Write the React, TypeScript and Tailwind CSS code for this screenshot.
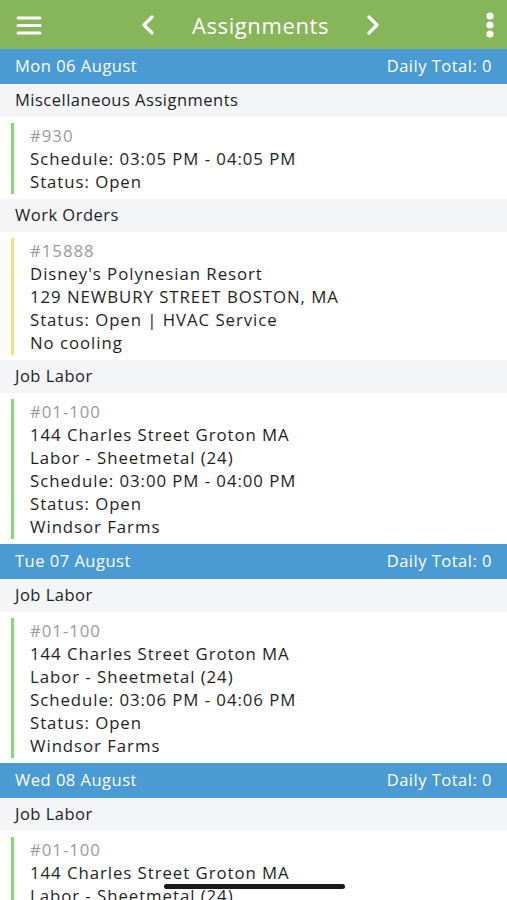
import { Fragment } from "react";

type Card = { id: string; lines: string[]; color: string };
type Group = { title: string; cards: Card[] };
type Day = { date: string; groups: Group[] };

const GREEN = "bg-[#7ee06a]";
const YELLOW = "bg-[#f2e27a]";

const jobLabor = (schedule: string): Card => ({
  id: "#01-100",
  color: GREEN,
  lines: [
    "144 Charles Street Groton MA",
    "Labor - Sheetmetal (24)",
    `Schedule: ${schedule}`,
    "Status: Open",
    "Windsor Farms",
  ],
});

const days: Day[] = [
  {
    date: "Mon 06 August",
    groups: [
      {
        title: "Miscellaneous Assignments",
        cards: [
          {
            id: "#930",
            color: GREEN,
            lines: ["Schedule: 03:05 PM - 04:05 PM", "Status: Open"],
          },
        ],
      },
      {
        title: "Work Orders",
        cards: [
          {
            id: "#15888",
            color: YELLOW,
            lines: [
              "Disney's Polynesian Resort",
              "129 NEWBURY STREET BOSTON, MA",
              "Status: Open | HVAC Service",
              "No cooling",
            ],
          },
        ],
      },
      { title: "Job Labor", cards: [jobLabor("03:00 PM - 04:00 PM")] },
    ],
  },
  {
    date: "Tue 07 August",
    groups: [{ title: "Job Labor", cards: [jobLabor("03:06 PM - 04:06 PM")] }],
  },
  {
    date: "Wed 08 August",
    groups: [{ title: "Job Labor", cards: [jobLabor("03:06 PM - 04:06 PM")] }],
  },
];

function Header() {
  return (
    <div className="h-[49px] bg-[#87b55a] flex items-center px-[16px] text-white shrink-0">
      <svg width="26" height="20" viewBox="0 0 26 20">
        <g stroke="white" strokeWidth="3" strokeLinecap="round">
          <line x1="2" y1="3" x2="24" y2="3" />
          <line x1="2" y1="10.5" x2="24" y2="10.5" />
          <line x1="2" y1="18" x2="24" y2="18" />
        </g>
      </svg>
      <div className="flex-1 flex items-center justify-center gap-[36px] pr-[6px]">
        <svg width="16" height="20" viewBox="0 0 16 20">
          <polyline points="12,2 4,10 12,18" fill="none" stroke="white" strokeWidth="3.2" strokeLinecap="round" strokeLinejoin="round" />
        </svg>
        <span className="text-[22px] leading-none tracking-[0.6px]">Assignments</span>
        <svg width="16" height="20" viewBox="0 0 16 20">
          <polyline points="4,2 12,10 4,18" fill="none" stroke="white" strokeWidth="3.2" strokeLinecap="round" strokeLinejoin="round" />
        </svg>
      </div>
      <svg width="10" height="26" viewBox="0 0 10 26" className="mr-[-4px]">
        <circle cx="5" cy="4" r="3.6" fill="white" />
        <circle cx="5" cy="13" r="3.6" fill="white" />
        <circle cx="5" cy="22" r="3.6" fill="white" />
      </svg>
    </div>
  );
}

function CardView({ card }: { card: Card }) {
  return (
    <div className="bg-white pl-[11px] pt-[7px] pb-[6px]">
      <div className="flex">
        <div className={`w-[3px] ${card.color} my-[-1px]`} />
        <div className="pl-[16px] text-[16.8px] leading-[23px] tracking-[0.95px] text-[#1e1e1e] whitespace-nowrap">
          <div className="text-[#9a9a9a]">{card.id}</div>
          {card.lines.map((l, i) => (
            <div key={i}>{l}</div>
          ))}
        </div>
      </div>
    </div>
  );
}

export default function App() {
  return (
    <div
      className="relative w-[507px] h-[900px] overflow-hidden bg-white flex flex-col"
      style={{ fontFamily: '"Open Sans", "Noto Sans", sans-serif' }}
    >
      <Header />
      {days.map((day) => (
        <Fragment key={day.date}>
          <div className="h-[35px] bg-[#4a9bd4] flex items-center justify-between px-[15px] text-white text-[16.5px] tracking-[0.5px] shrink-0">
            <span>{day.date}</span>
            <span>Daily Total: 0</span>
          </div>
          {day.groups.map((g) => (
            <Fragment key={g.title}>
              <div className="h-[33px] bg-[#f4f5f7] flex items-center px-[15px] text-[16.5px] tracking-[0.5px] text-[#1e1e1e] shrink-0">
                {g.title}
              </div>
              {g.cards.map((c) => (
                <CardView key={c.id} card={c} />
              ))}
            </Fragment>
          ))}
        </Fragment>
      ))}
      <div className="absolute left-[164px] top-[884px] w-[181px] h-[5px] rounded-full bg-[#1a1a1a]" />
    </div>
  );
}
